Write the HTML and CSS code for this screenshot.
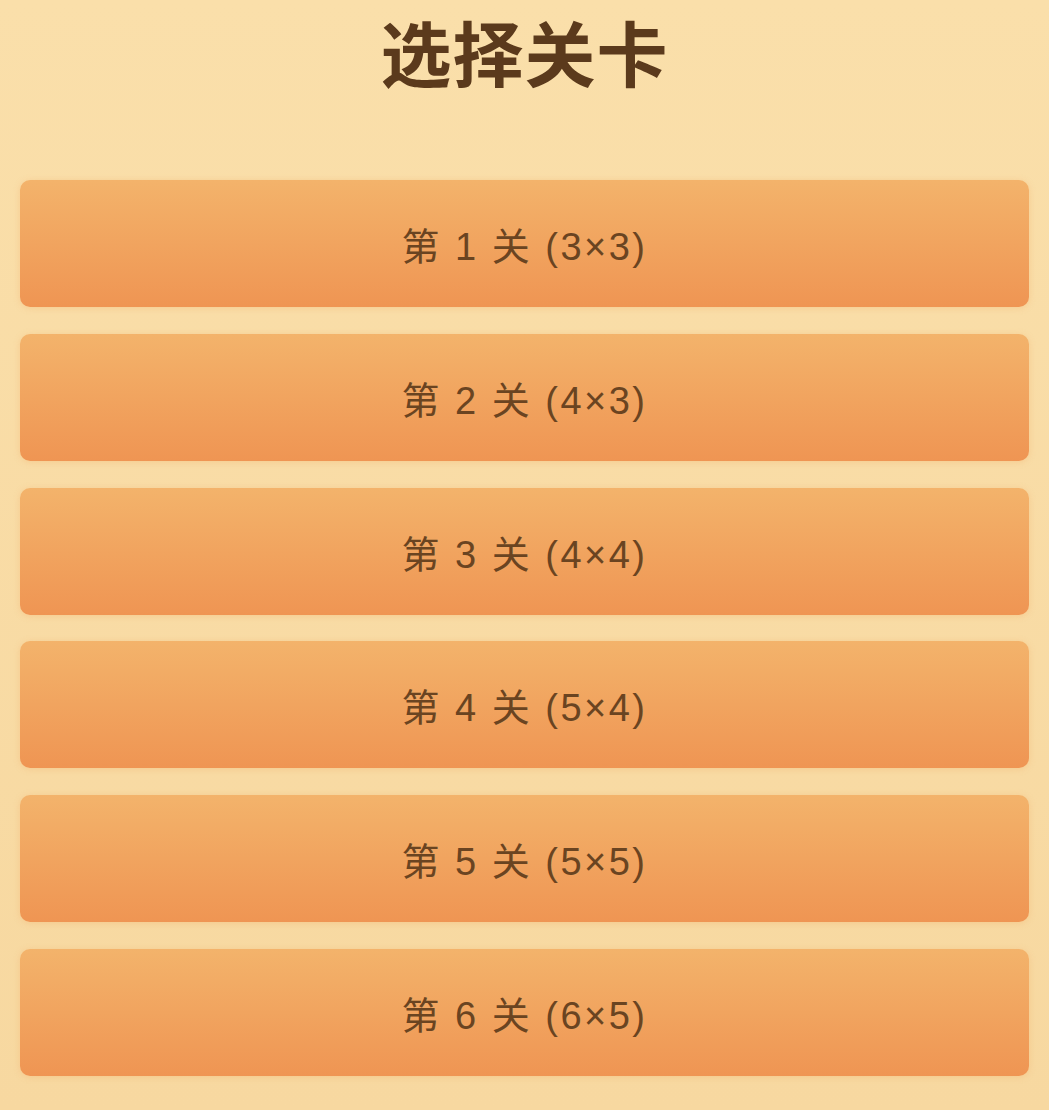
FILE: index.html
```html
<!DOCTYPE html>
<html lang="zh-CN">
<head>
	<meta charset="UTF-8">
	<meta name="viewport" content="width=device-width, initial-scale=1.0">
	<title>选择关卡</title>
	<link rel="stylesheet" href="styles.css">
</head>

<body>

	<div class="container">
		<h1>选择关卡</h1>

		<div class="levels">
			<button class="level-btn">第 1 关 (3×3)</button>
			<button class="level-btn">第 2 关 (4×3)</button>
			<button class="level-btn">第 3 关 (4×4)</button>
			<button class="level-btn">第 4 关 (5×4)</button>
			<button class="level-btn">第 5 关 (5×5)</button>
			<button class="level-btn">第 6 关 (6×5)</button>
		</div>
	</div>

</body></html>
```

FILE: styles.css
```css
body {
	font-family: "Liberation Sans", "Noto Sans CJK SC", sans-serif;
	background: linear-gradient(180deg, #fadfaa, #f7d8a0);
	margin: 0;
	padding: 0 20px;
	min-height: 100vh;
	box-sizing: border-box;
}

.container {
	display: flex;
	flex-direction: column;
}

h1 {
	font-family: "Noto Sans CJK SC", sans-serif;
	text-align: center;
	font-size: 71px;
	font-weight: bold;
	line-height: 100px;
	letter-spacing: 1px;
	color: #5b3a1c;
	margin: 0 0 80px;
}

.levels {
	display: flex;
	flex-direction: column;
	gap: 26.8px;
}

.level-btn {
	font-family: inherit;
	height: 127px;
	width: 100%;
	border: none;
	border-radius: 10px;
	background: linear-gradient(180deg, #f3b36b, #ef9553);
	box-shadow: 0 1px 6px rgba(240, 170, 100, 0.35);
	color: #6a4421;
	font-size: 38px;
	letter-spacing: 2.5px;
	cursor: pointer;
}
```
